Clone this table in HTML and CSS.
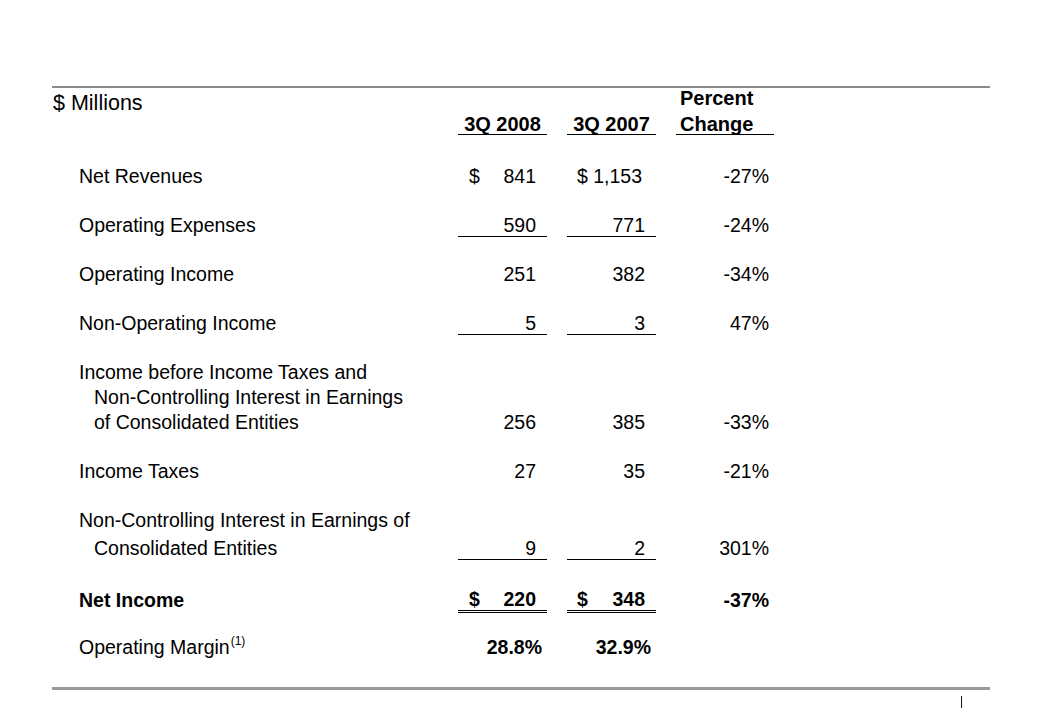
FILE: index.html
```html
<!DOCTYPE html>
<html lang="en">
<head>
<meta charset="utf-8">
<title>$ Millions</title>
<link rel="stylesheet" href="styles.css">
</head>
<body>
<div class="page">
  <div class="sheet">
    <div class="row head">
      <div class="units">$ Millions</div>
      <div class="hcol center"><div class="hl2">3Q 2008</div></div>
      <div class="hcol center"><div class="hl2">3Q 2007</div></div>
      <div class="hcol pct"><div class="hl1">Percent</div><div class="hl2">Change</div></div>
    </div>

    <div class="body">
      <div class="row">
        <div class="label"><div>Net Revenues</div></div>
        <div class="val split"><span>$</span><span>841</span></div>
        <div class="val split c2"><span>$ 1,153</span></div>
        <div class="val pc">-27%</div>
      </div>
      <div class="row">
        <div class="label"><div>Operating Expenses</div></div>
        <div class="val ul">590</div>
        <div class="val ul c2">771</div>
        <div class="val pc">-24%</div>
      </div>
      <div class="row">
        <div class="label"><div>Operating Income</div></div>
        <div class="val">251</div>
        <div class="val c2">382</div>
        <div class="val pc">-34%</div>
      </div>
      <div class="row">
        <div class="label"><div>Non-Operating Income</div></div>
        <div class="val ul">5</div>
        <div class="val ul c2">3</div>
        <div class="val pc">47%</div>
      </div>
      <div class="row">
        <div class="label">
          <div>Income before Income Taxes and</div>
          <div class="indent">Non-Controlling Interest in Earnings</div>
          <div class="indent">of Consolidated Entities</div>
        </div>
        <div class="val">256</div>
        <div class="val c2">385</div>
        <div class="val pc">-33%</div>
      </div>
      <div class="row">
        <div class="label"><div>Income Taxes</div></div>
        <div class="val">27</div>
        <div class="val c2">35</div>
        <div class="val pc">-21%</div>
      </div>
      <div class="row">
        <div class="label">
          <div>Non-Controlling Interest in Earnings of</div>
          <div class="indent second">Consolidated Entities</div>
        </div>
        <div class="val ul">9</div>
        <div class="val ul c2">2</div>
        <div class="val pc">301%</div>
      </div>
      <div class="row bold net">
        <div class="label"><div>Net Income</div></div>
        <div class="val split dbl"><span>$</span><span>220</span></div>
        <div class="val split dbl c2"><span>$</span><span>348</span></div>
        <div class="val pc">-37%</div>
      </div>
      <div class="row margin">
        <div class="label"><div>Operating Margin<sup class="note">(1)</sup></div></div>
        <div class="val b">28.8%</div>
        <div class="val b c2">32.9%</div>
        <div class="val pc"></div>
      </div>
    </div>
  </div>
  <div class="footer"><span class="pageno">|</span></div>
</div>
</body>
</html>
```

FILE: styles.css
```css
html, body {
  margin: 0;
  padding: 0;
  background: #ffffff;
}

body {
  font-family: "Liberation Sans", Arial, sans-serif;
  color: #000000;
  width: 1039px;
  height: 720px;
  overflow: hidden;
}

.page {
  padding-top: 86px;
  padding-left: 52px;
  width: 938px;
}

.sheet {
  border-top: 2px solid #8a8a8a;
  border-bottom: 3px solid #9a9a9a;
  height: 604px;
  box-sizing: border-box;
}

.row {
  display: grid;
  grid-template-columns: 386px 89px 89px 98px;
  column-gap: 20px;
  font-size: 19.5px;
}

.head {
  font-weight: bold;
  font-size: 20px;
}

.units {
  font-weight: normal;
  font-size: 21.5px;
  line-height: 20px;
  padding-top: 5px;
  padding-left: 1px;
  align-self: start;
}

.hcol {
  align-self: end;
  border-bottom: 1px solid #000;
}

.hcol.center {
  text-align: center;
}

.hcol.pct {
  padding-left: 4px;
}

.hl1 {
  line-height: 20px;
}

.hl2 {
  line-height: 20px;
}

.pct .hl2 {
  margin-top: 6px;
}

.body {
  display: flex;
  flex-direction: column;
  gap: 24px;
  padding-top: 29px;
}

.label {
  padding-left: 27px;
  line-height: 25px;
}

.label .indent {
  padding-left: 15px;
}

.label .second {
  margin-top: 3px;
}

.val {
  align-self: end;
  text-align: right;
  line-height: 22px;
  padding-right: 11px;
  border-bottom: 1px solid transparent;
  margin-bottom: 1px;
}

.val.c2 {
  padding-right: 11px;
}

.val.split {
  display: flex;
  justify-content: space-between;
  padding-left: 11px;
}

.val.split.c2 {
  justify-content: flex-start;
  padding-left: 10px;
}

.net .val.split.c2 {
  justify-content: space-between;
}

.val.ul {
  border-bottom-color: #000;
}

.val.pc {
  padding-right: 5px;
}

.bold {
  font-weight: bold;
}

.net {
  margin-top: 3px;
}

.val.dbl {
  border-bottom: 3px double #000;
  margin-bottom: 0;
}

.margin {
  margin-top: -2px;
}

.val.b {
  font-weight: bold;
  padding-right: 5px;
}

.note {
  font-size: 12px;
  vertical-align: top;
  position: relative;
  top: 0;
  margin-left: 1px;
  line-height: 12px;
}

.footer {
  display: flex;
  justify-content: flex-end;
  padding-right: 27px;
  padding-top: 4px;
}

.pageno {
  font-size: 12px;
  line-height: 14px;
  color: #000;
  will-change: transform;
}
```
